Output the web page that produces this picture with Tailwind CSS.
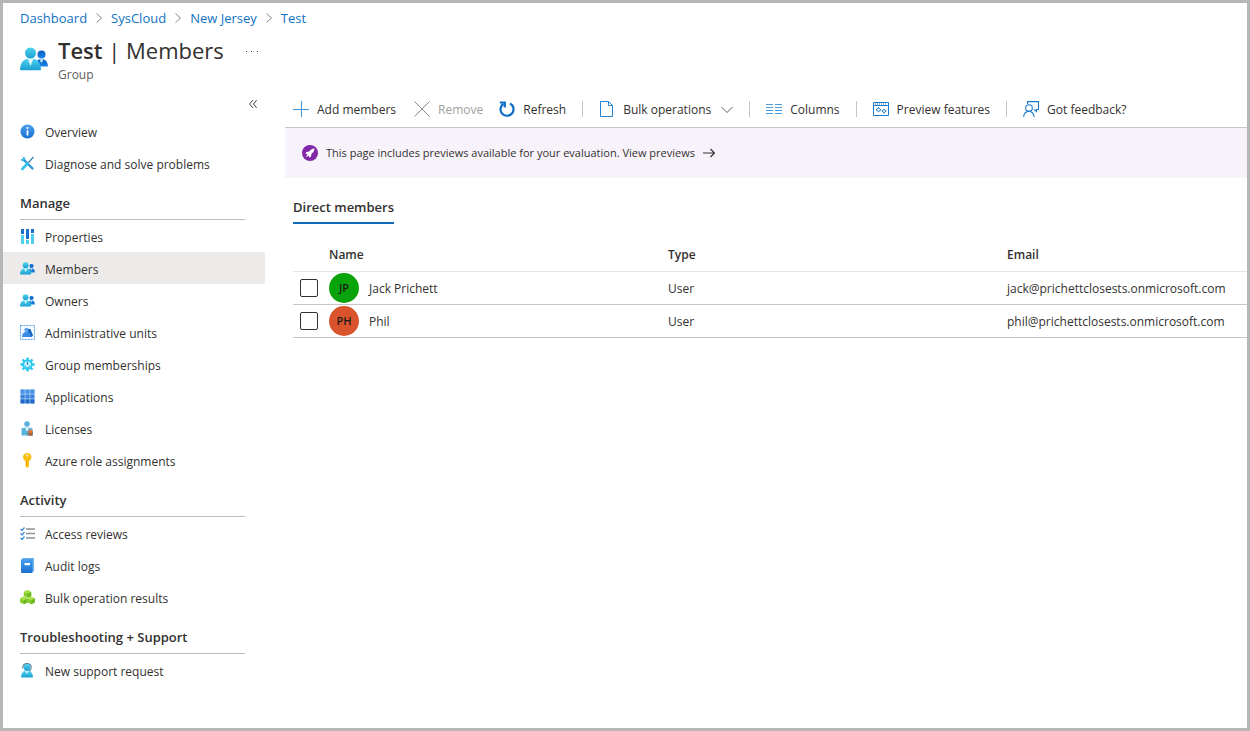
<!DOCTYPE html>
<html lang="en">
<head>
<meta charset="utf-8">
<meta name="viewport" content="width=device-width, initial-scale=1">
<title>Test | Members</title>
<script src="https://cdn.jsdelivr.net/npm/@tailwindcss/browser@4"></script>
</head>
<body class="flex min-h-screen flex-col border-3 border-[#b7b6b6] bg-white font-['Segoe_UI','Open_Sans','Noto_Sans',sans-serif] text-xs leading-5 text-[#323130]">
<svg class="absolute size-0" aria-hidden="true">
  <defs>
    <linearGradient id="cyan" x1="0" y1="0" x2="0" y2="1"><stop offset="0" stop-color="#4fd3f2"/><stop offset="1" stop-color="#1a9fd0"/></linearGradient>
    <linearGradient id="blue" x1="0" y1="0" x2="0" y2="1"><stop offset="0" stop-color="#0a5fc0"/><stop offset="1" stop-color="#1b86e8"/></linearGradient>
    <linearGradient id="sky" x1="0" y1="0" x2="0" y2="1"><stop offset="0" stop-color="#4aa0ee"/><stop offset="1" stop-color="#1a6fd0"/></linearGradient>
    <symbol id="people" viewBox="0 0 28 24">
      <circle cx="21.500" cy="7.500" r="4" fill="url(#blue)"/>
      <path d="M15 19.500c.5-4.500 2.300-7.500 6.500-7.500s6 3 6.500 6.800c0 .5-.4.700-.9.700z" fill="url(#blue)"/>
      <path d="M19.500 12.200h4l-2 4z" fill="#cfe6fb"/>
      <circle cx="10.500" cy="6" r="5.500" fill="url(#cyan)"/>
      <path d="M0 22c.6-6 3-10.500 10.500-10.500S20.400 16 21 22c0 .9-.5 1.300-1.200 1.300H1.200C.5 23.300 0 22.900 0 22z" fill="url(#cyan)"/>
      <path d="M7.600 11.800h5.800L10.500 19z" fill="#d8f5fc"/>
    </symbol>
  </defs>
</svg>

<header class="pl-[17px]">
  <nav aria-label="Breadcrumb" class="flex h-[30px] items-center text-[13px] text-[#0f72c4]">
    <a href="#">Dashboard</a>
    <svg class="mx-[9px] h-2.5 w-1.5" viewBox="0 0 6 10" fill="none" stroke="#8a8886"><path d="M.5.500 5.500 5l-5 4.500"/></svg>
    <a href="#">SysCloud</a>
    <svg class="mx-[9px] h-2.5 w-1.5" viewBox="0 0 6 10" fill="none" stroke="#8a8886"><path d="M.5.500 5.500 5l-5 4.500"/></svg>
    <a href="#">New Jersey</a>
    <svg class="mx-[9px] h-2.5 w-1.5" viewBox="0 0 6 10" fill="none" stroke="#8a8886"><path d="M.5.500 5.500 5l-5 4.500"/></svg>
    <a href="#">Test</a>
  </nav>
  <div class="flex h-[54px] items-start pt-1">
    <svg class="mt-2.5 h-6 w-7"><use href="#people"/></svg>
    <div class="ml-2.5">
      <h1 class="pb-0.5 text-[22px] leading-[26px]"><span class="font-semibold">Test</span> | Members</h1>
      <p class="text-xs leading-5 text-[#605e5c]">Group</p>
    </div>
    <button type="button" aria-label="More" class="ml-[22px] mt-1.5 flex h-4 w-3 items-center justify-between"><i class="size-px bg-[#323130]"></i><i class="size-px bg-[#323130]"></i><i class="size-px bg-[#323130]"></i></button>
  </div>
</header>

<div class="flex flex-1">
  <nav aria-label="Group menu" class="w-[262px] shrink-0">
    <div class="flex h-7 justify-end pt-3 pr-2">
      <button type="button" aria-label="Collapse menu" class="h-2.5"><svg class="h-2.5 w-2" viewBox="0 0 8 10" fill="none" stroke="#484644"><path d="M4 1 .7 5 4 9M7.700 1 4.400 5l3.300 4"/></svg></button>
    </div>
    <ul>
      <li><a href="#" class="flex h-8 items-center gap-2.5 pt-1 pl-[17px]"><svg class="mb-[3px] size-[15px]" viewBox="0 0 15 15"><circle cx="7.500" cy="7.500" r="7" fill="url(#sky)"/><circle cx="7.500" cy="4" r="1.100" fill="#fff"/><path d="M6.600 6.200h1.800v5.300H6.600z" fill="#fff"/></svg>Overview</a></li>
      <li><a href="#" class="flex h-8 items-center gap-2.5 pt-1 pl-[17px]"><svg class="mb-[3px] size-[15px]" viewBox="0 0 15 15" fill="none"><path d="M3.500 3.500 12.500 12.500" stroke="#2a93d5" stroke-width="2.400" stroke-linecap="round"/><path d="M1 3.500 3.200 4.400 4.400 3.200 3.500 1" stroke="#35b5e5" stroke-width="1.800"/><path d="M13.500 1 8 7" stroke="#3b7fb0" stroke-width="1.200"/><path d="M7.500 7.500 2.300 13" stroke="#35c1ea" stroke-width="2.600" stroke-linecap="round"/></svg>Diagnose and solve problems</a></li>
    </ul>
    <h2 class="ml-[17px] mr-5 mt-px h-10 border-b border-[#bdbbb9] pt-[13px] text-[13px] leading-5 font-semibold">Manage</h2>
    <ul>
      <li><a href="#" class="flex h-8 items-center gap-2.5 pt-1 pl-[17px]"><svg class="mb-[3px] size-[15px]" viewBox="0 0 15 15"><path d="M1 0h3v15H1zM6 0h3v15H6zM11 0h3v15h-3z" fill="#4fd0f0"/><path d="M1 0h3v5H1zM6 0h3v10H6zM11 0h3v4h-3z" fill="#1a6fc8"/><path d="M1 5h3v1H1zM6 10h3v1H6zM11 4h3v1h-3z" fill="#fff"/></svg>Properties</a></li>
      <li><a href="#" aria-current="page" class="flex h-8 items-center gap-2.5 bg-[#edebe9] pt-1 pl-[17px]"><svg class="mb-[3px] size-[15px]"><use href="#people"/></svg>Members</a></li>
      <li><a href="#" class="flex h-8 items-center gap-2.5 pt-1 pl-[17px]"><svg class="mb-[3px] size-[15px]"><use href="#people"/></svg>Owners</a></li>
      <li><a href="#" class="flex h-8 items-center gap-2.5 pt-1 pl-[17px]"><svg class="mb-[3px] size-[15px]" viewBox="0 0 15 15"><path d="M.5.500h14v14H.5z" fill="#f3f9ff" stroke="#5ba5ea" stroke-dasharray="2 1"/><circle cx="6.500" cy="5" r="2.200" fill="#5aa5f2"/><path d="M8 4h2.500l2.500 6.500-1.500 1.500H8z" fill="#1a63c4"/><path d="M2 12c.3-3.500 1.500-5 4.500-5s3.800 1.500 4.300 5z" fill="#3c8ae8"/></svg>Administrative units</a></li>
      <li><a href="#" class="flex h-8 items-center gap-2.5 pt-1 pl-[17px]"><svg class="mb-[3px] size-[15px]" viewBox="0 0 15 15" fill="none" stroke="#2cc9ee"><path d="M7.500.400v3M7.500 11.600v3M.4 7.500h3M11.600 7.500h3M2.500 2.500l2 2M10.500 10.500l2 2M12.500 2.500l-2 2M4.500 10.500l-2 2" stroke-width="2.400"/><circle cx="7.500" cy="7.500" r="4.200" fill="#d9f7fd" stroke-width="2"/><path d="M7.500 4.500V8" stroke="#1b8fd0" stroke-width="1.400"/><path d="M5.500 8.500a2 2 0 0 0 4 0" stroke="#35b8e4"/></svg>Group memberships</a></li>
      <li><a href="#" class="flex h-8 items-center gap-2.5 pt-1 pl-[17px]"><svg class="mb-[3px] size-[15px]" viewBox="0 0 15 15"><path d="M.5.500h14v14H.5z" fill="#b4d4f6"/><path d="M.5.500h4.200v4.200H.5zM5.400.500h4.200v4.200H5.400zM10.300.500h4.200v4.200h-4.200z" fill="#4a94e8"/><path d="M.5 5.400h4.200v4.200H.5zM5.400 5.400h4.200v4.200H5.400zM10.300 5.400h4.200v4.200h-4.200z" fill="#3a84de"/><path d="M.5 10.300h4.200v4.200H.5zM5.400 10.300h4.200v4.200H5.400zM10.300 10.300h4.200v4.200h-4.200z" fill="#1f68c9"/></svg>Applications</a></li>
      <li><a href="#" class="flex h-8 items-center gap-2.5 pt-1 pl-[17px]"><svg class="mb-[3px] size-[15px]" viewBox="0 0 15 15"><circle cx="7" cy="3" r="2.800" fill="#5ab0dc"/><path d="M1.500 7.500 5 6.500h4l3.500 1V14q0 .5-.5.500H2Q1.500 14.500 1.500 14z" fill="#58b4dd"/><path d="M5 6.500h4L7 11z" fill="#e4f4fb"/><path d="M7 10h6v4.500H7z" fill="#7a8a94"/><circle cx="10.500" cy="10.500" r="2" fill="#e07a35"/><path d="m9.500 12-.3 3 1.300-.8 1.300.8-.3-3z" fill="#b9541c"/></svg>Licenses</a></li>
      <li><a href="#" class="flex h-8 items-center gap-2.5 pt-1 pl-[17px]"><svg class="mb-[3px] size-[15px]" viewBox="0 0 15 15"><path d="M7.200 0C9.800 0 11.500 1.700 11.500 4S10 7.300 9 8v5.500L7.300 15 5.500 13.300V8C4.300 7.300 3 6.300 3 4S4.600 0 7.200 0z" fill="#fbbf10"/><circle cx="7.200" cy="2.400" r="1.100" fill="#fff0b8"/><path d="M6.500 8.500v4.500" stroke="#f09c10"/></svg>Azure role assignments</a></li>
    </ul>
    <h2 class="ml-[17px] mr-5 mt-px h-10 border-b border-[#bdbbb9] pt-[13px] text-[13px] leading-5 font-semibold">Activity</h2>
    <ul>
      <li><a href="#" class="flex h-8 items-center gap-2.5 pt-1 pl-[17px]"><svg class="mb-[3px] size-[15px]" viewBox="0 0 15 15" fill="none"><path d="M.5 3 2 4.300 4.500 1.500M.5 7.500 2 8.800 4.500 6M.5 12 2 13.300l2.500-2.800" stroke="#2f86d2" stroke-width="1.200"/><path d="M6 3h9M6 7.500h9M6 12h9" stroke="#8d9399" stroke-width="1.400"/></svg>Access reviews</a></li>
      <li><a href="#" class="flex h-8 items-center gap-2.5 pt-1 pl-[17px]"><svg class="mb-[3px] size-[15px]" viewBox="0 0 15 15"><path d="M2.500 0H14v13.500H2z" fill="#6cb2ee"/><path d="M2 1h10.500v14H2Q1 15 1 14V2Q1 1 2 1z" fill="url(#sky)"/><path d="M4.500 5h5.500v2.200H4.500z" fill="#fff"/></svg>Audit logs</a></li>
      <li><a href="#" class="flex h-8 items-center gap-2.5 pt-1 pl-[17px]"><svg class="mb-[3px] size-[15px]" viewBox="0 0 15 15"><g id="cube"><path d="m7.500 0 3.700 1.900v4L7.500 7.800 3.800 5.900v-4z" fill="#84cc2e"/><path d="m7.500 0 3.700 1.900-3.700 1.800-3.700-1.800z" fill="#a9e34b"/><path d="m7.500 3.700 3.700-1.800v4L7.500 7.800z" fill="#6cb820"/></g><use href="#cube" x="-3.700" y="6.500"/><use href="#cube" x="3.700" y="6.500"/></svg>Bulk operation results</a></li>
    </ul>
    <h2 class="ml-[17px] mr-5 mt-px h-10 border-b border-[#bdbbb9] pt-[13px] text-[13px] leading-5 font-semibold">Troubleshooting + Support</h2>
    <ul>
      <li><a href="#" class="flex h-8 items-center gap-2.5 pt-1 pl-[17px]"><svg class="mb-[3px] size-[15px]" viewBox="0 0 15 15"><circle cx="7" cy="4.500" r="3.400" fill="url(#cyan)"/><path d="M2.800 5.500C2.500 2 4.500.500 7 .500s4.600 1.500 4.200 5" fill="none" stroke="#4f7f99" stroke-width="1.100"/><path d="M11 5.500Q11 8 8.500 8.300" fill="none" stroke="#4f7f99"/><path d="M1 14.500C1.200 11 2.500 8.500 4.500 8h5c2 .5 3.300 3 3.500 6.500z" fill="url(#cyan)"/><path d="M5.300 8h3.400L7 11z" fill="#e2f8fd"/></svg>New support request</a></li>
    </ul>
  </nav>

  <main class="ml-5 min-w-0 flex-1">
    <div role="toolbar" aria-label="Member actions" class="flex h-[41px] items-center border-b border-[#c8c6c4] pt-1.5">
      <button type="button" class="flex items-center gap-2 pr-2.5 pl-2"><svg class="mb-0.5 size-4" viewBox="0 0 16 16" stroke="#3d95dc"><path d="M8.500 0v16M0 8.500h16"/></svg>Add members</button>
      <button type="button" disabled class="flex items-center gap-2 px-2 text-[#a19f9d]"><svg class="mb-0.5 size-4" viewBox="0 0 16 16" stroke="#8a8886"><path d="m.5.500 15 15m0-15-15 15"/></svg>Remove</button>
      <button type="button" class="flex items-center gap-2 px-2"><svg class="mb-0.5 size-4" viewBox="0 0 16 16" fill="none" stroke="#0f6fc6" stroke-width="2.200"><path d="M11 2.500A6.500 6.500 0 1 1 4.500 2.800"/><path d="M.8 1.500h5V6.500"/></svg>Refresh</button>
      <i class="mx-2 mb-0.5 h-4 w-px bg-[#c8c6c4]"></i>
      <button type="button" class="flex items-center gap-2 px-2"><svg class="mb-0.5 size-4" viewBox="0 0 16 16" fill="none" stroke="#2583d3"><path d="M1.500.500h8l4 4v11h-12zM9.500.500v4h4"/></svg>Bulk operations<svg class="ml-0.5 h-2 w-3" viewBox="0 0 12 8" fill="none" stroke="#605e5c"><path d="m.5 1 5.500 5.500L11.500 1"/></svg></button>
      <i class="mx-2 mb-0.5 h-4 w-px bg-[#c8c6c4]"></i>
      <button type="button" class="flex items-center gap-2 px-2"><svg class="mb-0.5 size-4" viewBox="0 0 16 16" stroke="#4a9de0"><path d="M0 3.500h7M9 3.500h7M0 6.500h7M9 6.500h7M0 9.500h7M9 9.500h7M0 12.500h7M9 12.500h7"/></svg>Columns</button>
      <i class="mx-2 mb-0.5 h-4 w-px bg-[#c8c6c4]"></i>
      <button type="button" class="flex items-center gap-2 px-2"><svg class="mb-0.5 size-4" viewBox="0 0 16 16" fill="none" stroke="#1b7ac9"><path d="M.5 1.500h15v13H.5zM.5 4.500h15"/><path d="M2 3h12" stroke-dasharray="1 1"/><path d="m5.500 6.500 1 1.500 1.500.800-1.500.800-1 1.500-1-1.500L3 8.800 4.500 8zM11 8l.8 1.300 1.300.800-1.300.700L11 12.200l-.8-1.400-1.300-.700 1.300-.800z"/></svg>Preview features</button>
      <i class="mx-2 mb-0.5 h-4 w-px bg-[#c8c6c4]"></i>
      <button type="button" class="flex items-center gap-2 px-2"><svg class="mb-0.5 size-4" viewBox="0 0 16 16" fill="none" stroke="#1b7ac9" stroke-width="1.100"><path d="M4.500 3V.6h11v7.900h-2v2L11 8.300"/><circle cx="6" cy="7" r="3.300"/><path d="M.6 16c.3-3.500 2.400-5.600 5.400-5.600s4.600 2.100 5.200 5.600"/></svg>Got feedback?</button>
    </div>

    <div class="flex h-[50px] items-center bg-[#f8f3fa] pl-[17px] text-[11px]">
      <svg class="mr-2 size-4" viewBox="0 0 16 16"><circle cx="8" cy="8" r="8" fill="#8128a8"/><path d="M12.500 3.500c-2.500.2-4.200 1.300-5.300 3L4.500 7 3.300 8.800l2.200.2-1.700 3.200L7 10.500l.2 2.200L9 11.500l.5-2.700c1.700-1.100 2.800-2.800 3-5.300z" fill="#fff"/></svg>
      <p>This page includes previews available for your evaluation. <a href="#">View previews</a></p>
      <svg class="ml-2 h-2.5 w-3" viewBox="0 0 12 10" fill="none" stroke="#323130" stroke-width="1.200"><path d="M0 5h11.500M7.500 1l4 4-4 4"/></svg>
    </div>

    <div class="pl-2">
      <div role="tablist" class="mt-4 flex">
        <button type="button" role="tab" aria-selected="true" class="h-[30px] border-b-2 border-[#0f6cbd] pb-0.5 text-[13px] font-semibold">Direct members</button>
      </div>
      <table class="mt-[13px] w-full table-fixed border-collapse text-left">
        <colgroup><col class="w-9"><col><col><col class="w-60"></colgroup>
        <thead>
          <tr class="h-[34px] border-b border-[#e6e4e2]"><td></td><th scope="col" class="pt-0.5 font-semibold">Name</th><th scope="col" class="pt-0.5 font-semibold">Type</th><th scope="col" class="pt-0.5 font-semibold">Email</th></tr>
        </thead>
        <tbody>
          <tr class="h-[33px] border-b border-[#c8c6c4]">
            <td class="pl-[7px]"><input type="checkbox" aria-label="Select Jack Prichett" class="block size-[18px] appearance-none rounded-xs border border-[#323130]"></td>
            <td><div class="flex items-center gap-2.5"><span class="flex size-[30px] items-center justify-center rounded-full bg-[#09a30b] text-[11px] font-semibold text-[#1b1a19]">JP</span><span class="pt-[3px]">Jack Prichett</span></div></td>
            <td class="pt-[3px]">User</td>
            <td class="pt-[3px]">jack@prichettclosests.onmicrosoft.com</td>
          </tr>
          <tr class="h-[33px] border-b border-[#c8c6c4]">
            <td class="pl-[7px]"><input type="checkbox" aria-label="Select Phil" class="block size-[18px] appearance-none rounded-xs border border-[#323130]"></td>
            <td><div class="flex items-center gap-2.5"><span class="flex size-[30px] items-center justify-center rounded-full bg-[#d9532c] text-[11px] font-semibold text-[#1b1a19]">PH</span><span class="pt-[3px]">Phil</span></div></td>
            <td class="pt-[3px]">User</td>
            <td class="pt-[3px]">phil@prichettclosests.onmicrosoft.com</td>
          </tr>
        </tbody>
      </table>
    </div>
  </main>
</div>
</body>
</html>
